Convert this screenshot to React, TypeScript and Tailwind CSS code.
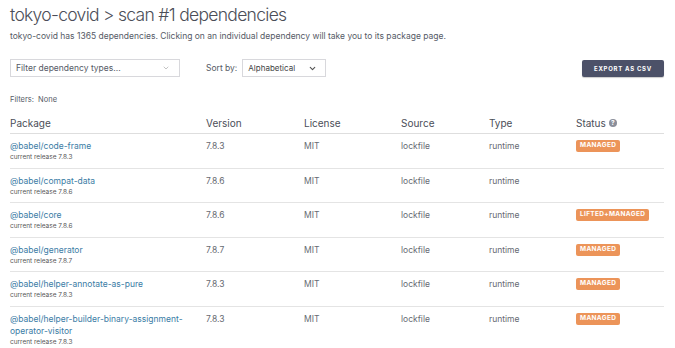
import { ChevronDown } from "lucide-react";

const ROWS = [
  { name: "@babel/code-frame", version: "7.8.3", status: "MANAGED" },
  { name: "@babel/compat-data", version: "7.8.6", status: "" },
  { name: "@babel/core", version: "7.8.6", status: "LIFTED+MANAGED" },
  { name: "@babel/generator", version: "7.8.7", status: "MANAGED" },
  { name: "@babel/helper-annotate-as-pure", version: "7.8.3", status: "MANAGED" },
  { name: "@babel/helper-builder-binary-assignment-operator-visitor", version: "7.8.3", status: "MANAGED" },
];

const COLS = "grid grid-cols-[196px_98px_97px_88px_87px_1fr]";

export default function App() {
  return (
    <div className="w-[675px] h-[348px] overflow-hidden bg-white px-[10px] font-['Inter',sans-serif] text-[#555a66]">
      <h1 className="pt-[3px] text-[17.5px] font-light leading-[24px] tracking-[-0.04em] text-[#4b4e58]">
        tokyo-covid &gt; scan #1 dependencies
      </h1>
      <p className="mt-[3px] text-[8.5px] leading-[12px] text-[#555a66]">
        tokyo-covid has 1365 dependencies. Clicking on an individual dependency will take you to its package page.
      </p>

      <div className="mt-[17px] flex items-center">
        <div className="flex h-[18px] w-[170px] items-center justify-between border border-[#d8d8dc] px-[5px] text-[8.5px] text-[#555a66]">
          <span>Filter dependency types...</span>
          <ChevronDown className="mr-[4px] h-[8px] w-[8px] text-[#888]" strokeWidth={1.5} />
        </div>
        <span className="ml-[26px] text-[8.5px] text-[#555a66]">Sort by:</span>
        <div className="ml-[5px] flex h-[18px] w-[84px] items-center justify-between border border-[#d8d8dc] px-[5px] text-[8px] text-[#444]">
          <span>Alphabetical</span>
          <ChevronDown className="mr-[3px] h-[9px] w-[9px] text-[#555]" strokeWidth={3} />
        </div>
        <button className="ml-auto mr-[1px] h-[17px] w-[82px] rounded-[2px] bg-[#4c5168] text-[6px] font-bold tracking-[0.12em] text-white shadow-[0_1px_1px_rgba(0,0,0,0.2)]">
          EXPORT AS CSV
        </button>
      </div>

      <p className="mt-[17px] text-[7.5px] text-[#555a66]">
        Filters:&nbsp;&nbsp;None
      </p>

      <div className="mt-[11px] w-[654px]">
        <div className={`${COLS} border-b border-[#dedede] pb-[3px] text-[10px] leading-[14px] text-[#4b4e58]`}>
          <span>Package</span>
          <span>Version</span>
          <span>License</span>
          <span>Source</span>
          <span>Type</span>
          <span className="flex items-center gap-[3px]">
            Status
            <span className="flex h-[8px] w-[8px] items-center justify-center rounded-full bg-[#8a8e9a] text-[6.5px] font-bold leading-none text-white">?</span>
          </span>
        </div>
        {ROWS.map((row, i) => (
          <div
            key={row.name}
            className={`${COLS} min-h-[34.5px] pt-[6px] text-[8.5px] text-[#666a72] ${i < ROWS.length - 1 ? "border-b border-[#e4e4e4]" : ""}`}
          >
            <div className="pr-[4px]">
              <div className="text-[8.5px] leading-[12px] text-[#3a7ca5]">{row.name}</div>
              <div className="mt-[1px] text-[6.5px] leading-[9px] text-[#555]">current release {row.version}</div>
            </div>
            <span className="leading-[12px]">{row.version}</span>
            <span className="leading-[12px]">MIT</span>
            <span className="leading-[12px]">lockfile</span>
            <span className="leading-[12px]">runtime</span>
            <div className="flex h-[12px] items-center">
              {row.status && (
                <span className="inline-flex h-[12px] items-center rounded-[2px] bg-[#ec9459] px-[4px] text-[6.5px] font-bold tracking-[0.05em] text-white">
                  {row.status}
                </span>
              )}
            </div>
          </div>
        ))}
      </div>
    </div>
  );
}
